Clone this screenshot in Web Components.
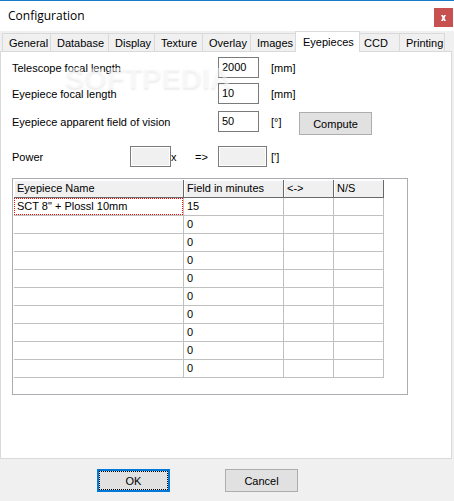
<!DOCTYPE html>
<html lang="en">
<head>
<meta charset="utf-8">
<title>Configuration</title>
<style>
    body {
        margin: 0;
        font: 11px/16px "Liberation Sans", sans-serif;
        color: #000;
        background: #f0f0f0;
    }
</style>
</head>
<body>
<config-dialog heading="Configuration">
    <tab-strip slot="tabs" active="Eyepieces"></tab-strip>
    <eyepiece-form></eyepiece-form>
    <eyepiece-grid></eyepiece-grid>
    <dialog-button slot="actions" label="OK" default></dialog-button>
    <dialog-button slot="actions" label="Cancel"></dialog-button>
</config-dialog>

<script>
class DialogButton extends HTMLElement {
    connectedCallback() {
        const label = this.getAttribute('label') || '';

        this.attachShadow({ mode: 'open' });
        this.shadowRoot.innerHTML = `
            <style>
                :host {
                    display: block;
                }
                button {
                    display: block;
                    box-sizing: border-box;
                    width: 73px;
                    height: 23px;
                    padding: 0;
                    font: inherit;
                    color: inherit;
                    background: #e1e1e1;
                    border: 1px solid #adadad;
                }
                :host([default]) button {
                    border: 2px solid #0078d7;
                    outline: 1px dotted #000;
                    outline-offset: -3px;
                }
            </style>
            <button type="button">${label}</button>
        `;
    }
}

class TabStrip extends HTMLElement {
    connectedCallback() {
        const active = this.getAttribute('active');
        const tabs = [
            ['General', 48], ['Database', 58], ['Display', 46], ['Texture', 48], ['Overlay', 48],
            ['Images', 45], ['Eyepieces', 65], ['CCD', 39], ['Printing', 46]
        ];

        this.attachShadow({ mode: 'open' });
        this.shadowRoot.innerHTML = `
            <style>
                :host {
                    display: block;
                }
                .tabs {
                    display: flex;
                    align-items: flex-end;
                    height: 20px;
                    padding-left: 2px;
                }
                button {
                    box-sizing: border-box;
                    height: 18px;
                    padding: 1px 0 0 6px;
                    font: inherit;
                    color: inherit;
                    text-align: left;
                    white-space: nowrap;
                    background: #f0f0f0;
                    border: solid #d9d9d9;
                    border-width: 1px 0 0 1px;
                }
                button:last-child {
                    border-right-width: 1px;
                }
                button[aria-selected="true"] {
                    height: 21px;
                    margin-bottom: -1px;
                    padding: 0 0 1px 7px;
                    background: #fff;
                    border-right-width: 1px;
                    z-index: 1;
                }
                button[aria-selected="true"] + button {
                    padding-left: 4px;
                    border-left: 0;
                }
            </style>
            <div class="tabs" role="tablist">
                ${tabs.map(([name, width]) => `
                    <button type="button" role="tab" style="width: ${width}px"
                        aria-selected="${name === active}">${name}</button>
                `).join('')}
            </div>
        `;
    }
}

class EyepieceForm extends HTMLElement {
    connectedCallback() {
        this.attachShadow({ mode: 'open' });
        this.shadowRoot.innerHTML = `
            <style>
                :host {
                    display: block;
                    position: relative;
                }
                .row {
                    display: flex;
                    align-items: center;
                    height: 21px;
                    margin-bottom: 5px;
                }
                .row.angle {
                    margin: 7px 0 14px;
                }
                .row.last {
                    margin-bottom: 11px;
                }
                label {
                    width: 206px;
                }
                .last label {
                    width: 118px;
                }
                input {
                    box-sizing: border-box;
                    width: 41px;
                    height: 21px;
                    padding: 0 0 1px 3px;
                    font: inherit;
                    color: inherit;
                    background: #fff;
                    border: 1px solid #7a7a7a;
                    border-radius: 0;
                }
                input:disabled {
                    background: #f0f0f0;
                    box-shadow: inset 0 0 0 1px #fff;
                }
                .unit {
                    width: 28px;
                    margin-left: 12px;
                }
                .times {
                    width: 24px;
                }
                .arrow {
                    width: 23px;
                }
                .last .wide {
                    width: 49px;
                }
                .wide + .unit {
                    margin-left: 4px;
                }
                dialog-button {
                    align-self: flex-start;
                    margin-top: 1px;
                }
                .watermark {
                    position: absolute;
                    top: 6px;
                    left: 53px;
                    font: bold 29px/30px "Liberation Sans", sans-serif;
                    color: rgba(255, 255, 255, 0.5);
                    text-shadow: 0 2px 2px rgba(0, 0, 0, 0.07);
                    pointer-events: none;
                }
            </style>
            <div class="row">
                <label for="scope">Telescope focal length</label>
                <input id="scope" value="2000">
                <span class="unit">[mm]</span>
            </div>
            <div class="row">
                <label for="eyepiece">Eyepiece focal length</label>
                <input id="eyepiece" value="10">
                <span class="unit">[mm]</span>
            </div>
            <div class="row angle">
                <label for="fov">Eyepiece apparent field of vision</label>
                <input id="fov" value="50">
                <span class="unit">[°]</span>
                <dialog-button label="Compute"></dialog-button>
            </div>
            <div class="row last">
                <label for="power">Power</label>
                <input id="power" disabled>
                <span class="times">x</span>
                <span class="arrow">=&gt;</span>
                <input class="wide" aria-label="Field in minutes" disabled>
                <span class="unit">[']</span>
            </div>
            <div class="watermark" aria-hidden="true">SOFTPEDIA</div>
        `;
    }
}

class EyepieceGrid extends HTMLElement {
    connectedCallback() {
        const rows = [['SCT 8" + Plossl 10mm', '15']];
        while (rows.length < 10) {
            rows.push(['', '0']);
        }

        this.attachShadow({ mode: 'open' });
        this.shadowRoot.innerHTML = `
            <style>
                :host {
                    display: block;
                    margin-right: 32px;
                    padding: 1px 1px 16px;
                    border: 1px solid #abadb3;
                }
                table {
                    width: 370px;
                    table-layout: fixed;
                    border-collapse: separate;
                    border-spacing: 0;
                }
                th, td {
                    box-sizing: border-box;
                    height: 18px;
                    padding: 0 0 0 3px;
                    font-weight: normal;
                    line-height: 17px;
                    text-align: left;
                    white-space: nowrap;
                    border: solid #c0c0c0;
                    border-width: 0 1px 1px 0;
                }
                th {
                    background: #f0f0f0;
                    border-color: #696969;
                    box-shadow: inset 1px 1px #fff;
                }
                td.selected {
                    padding: 0;
                }
                .selected div {
                    padding-left: 2px;
                    line-height: 15px;
                    border: 1px dotted #f00;
                }
                .name {
                    width: 170px;
                }
                .field {
                    width: 100px;
                }
            </style>
            <table>
                <thead>
                    <tr>
                        <th class="name">Eyepiece Name</th>
                        <th class="field">Field in minutes</th>
                        <th>&lt;-&gt;</th>
                        <th>N/S</th>
                    </tr>
                </thead>
                <tbody>
                    ${rows.map(([name, field]) => `
                        <tr>
                            <td${name ? ' class="selected"' : ''}>${name && `<div>${name}</div>`}</td>
                            <td>${field}</td>
                            <td></td>
                            <td></td>
                        </tr>
                    `).join('')}
                </tbody>
            </table>
        `;
    }
}

class ConfigDialog extends HTMLElement {
    connectedCallback() {
        const heading = this.getAttribute('heading') || '';

        this.attachShadow({ mode: 'open' });
        this.shadowRoot.innerHTML = `
            <style>
                :host {
                    display: flex;
                    flex-direction: column;
                    min-height: 100vh;
                }
                header {
                    display: flex;
                    align-items: center;
                    justify-content: space-between;
                    box-sizing: border-box;
                    height: 31px;
                    padding: 0 1px 0 8px;
                    background: #fff;
                    border-top: 1px solid #1979ca;
                }
                h1 {
                    margin: 0;
                    font: 12px/16px "Open Sans", sans-serif;
                }
                .close {
                    display: flex;
                    align-items: center;
                    justify-content: center;
                    width: 19px;
                    height: 19px;
                    margin-top: 3px;
                    padding: 0;
                    background: #c75050;
                    border: 0;
                }
                .panel {
                    flex: 1;
                    margin-right: 2px;
                    padding: 5px 11px 0;
                    background: #fff;
                    border: 1px solid #d9d9d9;
                }
                footer {
                    display: flex;
                    gap: 55px;
                    padding: 10px 0 9px 97px;
                }
            </style>
            <header>
                <h1>${heading}</h1>
                <button type="button" class="close" aria-label="Close">
                    <svg width="5" height="6" viewBox="0 0 5 6">
                        <path d="M0 0H2L2.5 1.5L3 0H5L3.5 3L5 6H3L2.5 4.5L2 6H0L1.5 3Z" fill="#fff"/>
                    </svg>
                </button>
            </header>
            <slot name="tabs"></slot>
            <main class="panel"><slot></slot></main>
            <footer><slot name="actions"></slot></footer>
        `;
    }
}

customElements.define('dialog-button', DialogButton);
customElements.define('tab-strip', TabStrip);
customElements.define('eyepiece-form', EyepieceForm);
customElements.define('eyepiece-grid', EyepieceGrid);
customElements.define('config-dialog', ConfigDialog);
</script>
</body>
</html>
